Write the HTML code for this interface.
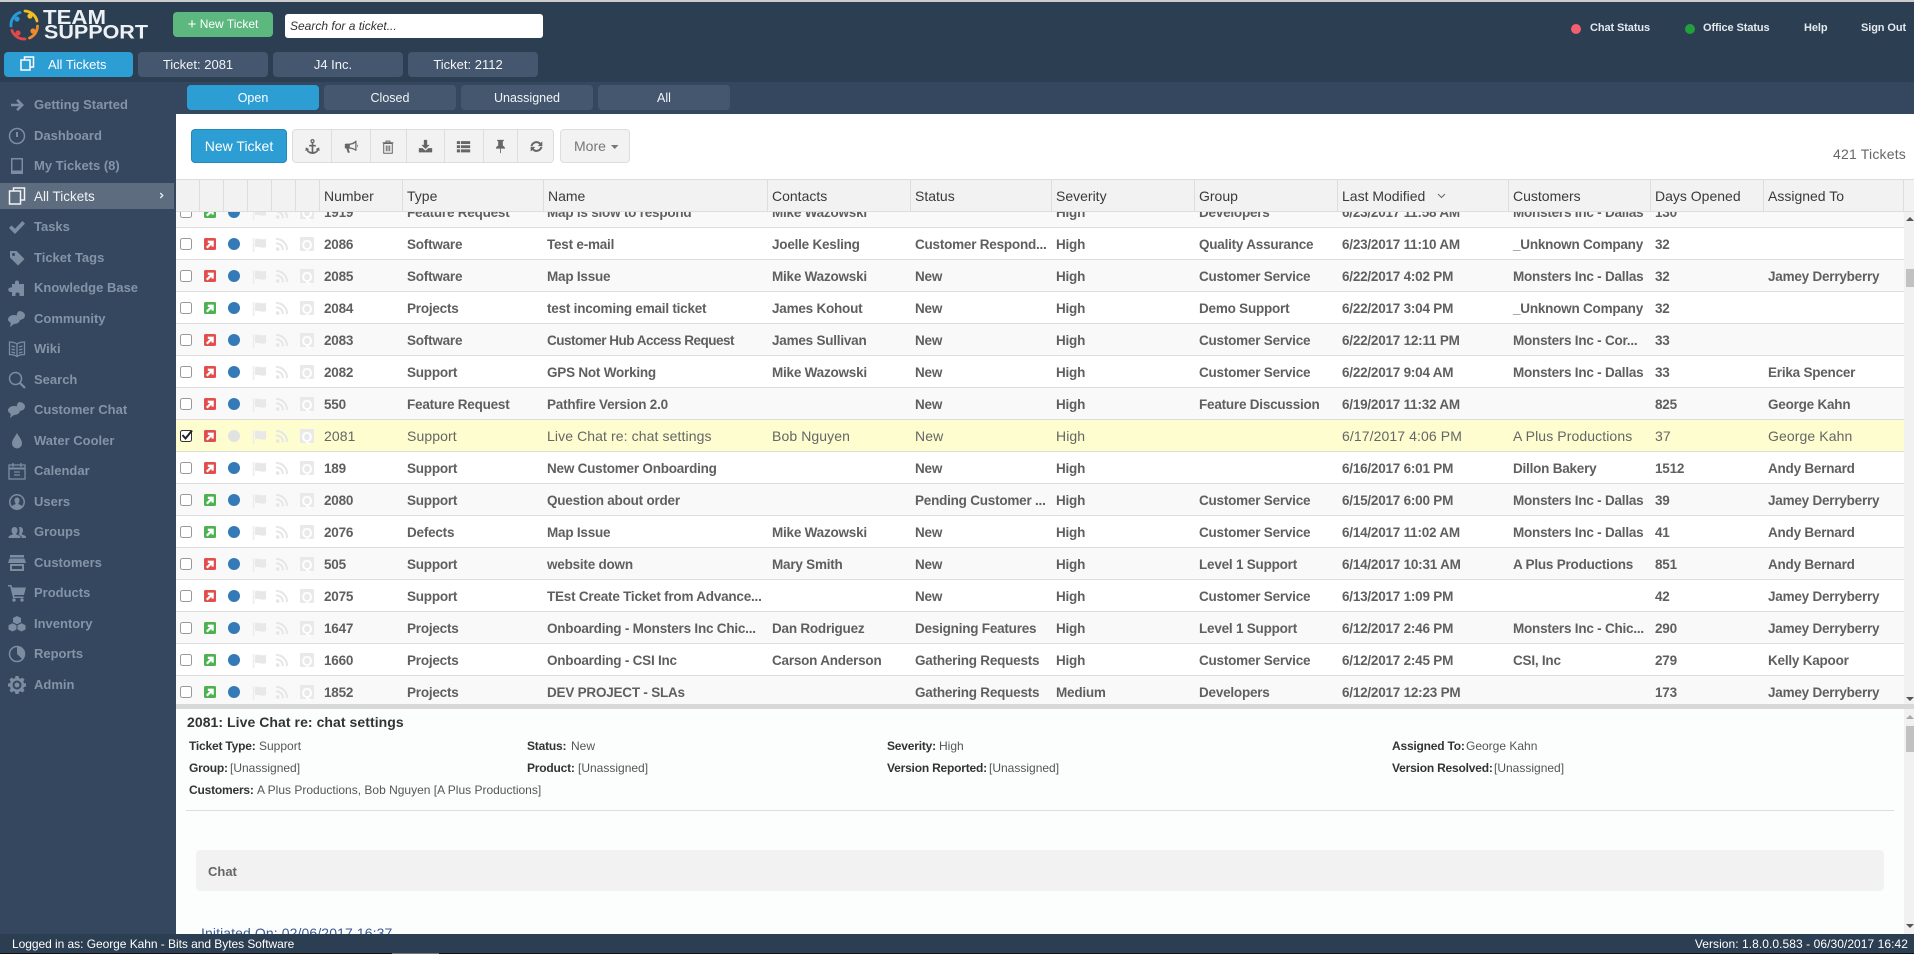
<!DOCTYPE html>
<html>
<head>
<meta charset="utf-8">
<title>TeamSupport</title>
<style>
html,body{margin:0;padding:0;width:1914px;height:954px;overflow:hidden;background:#fff}
body{position:relative;font-family:"Liberation Sans",Arial,sans-serif}
.a{position:absolute}
#top{left:0;top:0;width:1914px;height:82px;background:#2c3e52;border-top:2px solid #ccc;box-sizing:border-box}
#bar{left:0;top:82px;width:1914px;height:32px;background:#34475e}
#side{left:0;top:82px;width:176px;height:852px;background:#34475e}
.tab{position:absolute;height:25px;line-height:25px;text-align:center;color:#f2f4f6;font-size:13px;border-radius:4px;background:#44576f;box-sizing:border-box}
.t2{padding-right:10px}
.t3{line-height:26px;font-size:12.5px}
.on{background:#2c9ed4;color:#fff}
.st{position:absolute;top:22px;font-size:11px;font-weight:bold;color:#e4e9ee;line-height:12px;white-space:nowrap;letter-spacing:-.1px}
.s{position:absolute;left:0;width:174px;height:20px;line-height:20px;font-size:13px;font-weight:bold;color:#8494a8}
.s span{position:absolute;left:34px;top:0;white-space:nowrap}
.s svg{position:absolute;left:8px;top:1px;width:18px;height:18px;fill:#7c8ca1;stroke:none}
.sa{height:26px;line-height:26px;background:#5d6c7e;color:#f0f3f5;font-weight:normal}
.sa span{top:1px;line-height:26px;font-size:13.5px}
.btn{position:absolute;top:129px;height:34px;border-radius:4px}
.ti{position:absolute;top:139px;width:15px;height:15px;fill:#666}
.sep{position:absolute;top:130px;height:32px;width:1px;background:#ddd}
#hd{left:176px;top:179px;width:1738px;height:33px;background:#f2f2f2;border-top:1px solid #ddd;border-bottom:1px solid #ddd;box-sizing:border-box}
.hs{position:absolute;top:180px;height:31px;width:1px;background:#ddd}
.h{position:absolute;top:181px;height:31px;line-height:31px;font-size:14px;color:#3a3a3a;white-space:nowrap}
#list{left:176px;top:212px;width:1728px;height:492px;overflow:hidden;background:#fff}
.r{position:absolute;left:0;width:1728px;height:32px;border-bottom:1px solid #ddd;background:#fff;font-size:13.5px;font-weight:bold;color:#5f5f5f;letter-spacing:-.22px;box-sizing:border-box}
.o{background:#f9f9f9}
.y{background:#fdfdcf;font-weight:normal;font-size:14px;letter-spacing:.1px;color:#666}
.r svg{position:absolute;left:0;top:0;width:145px;height:31px}
.r b{position:absolute;top:1px;font-weight:inherit;line-height:31px;white-space:nowrap}
.c1{left:148px}.c2{left:231px}.c3{left:371px}.c4{left:596px}.c5{left:739px}.c6{left:880px}.c7{left:1023px}.c8{left:1166px}.c9{left:1337px}.c10{left:1479px}.c11{left:1592px}
#spl{left:176px;top:704px;width:1738px;height:5px;background:#d8d8d8}
#det{left:176px;top:709px;width:1738px;height:225px;background:#fcfefe;overflow:hidden}
.l{position:absolute;font-size:12px;letter-spacing:-.2px;font-weight:bold;color:#333;white-space:nowrap;line-height:14px}
.v{position:absolute;font-size:12px;color:#555;white-space:nowrap;line-height:14px}
#foot{left:0;top:934px;width:1914px;height:19px;background:#2c3e52;color:#fff;font-size:12px;line-height:21px;overflow:hidden}
</style>
</head>
<body>
<svg width="0" height="0" style="position:absolute">
<defs>
<symbol id="b" viewBox="0 0 145 31">
<rect x="4.500" y="10.500" width="11" height="11" rx="2" fill="#fff" stroke="#999"/>
<path d="M77.500 10v14" stroke="#ececec" stroke-width="1.500"/>
<path d="M79 11c3-1.500 6 1.500 11-.2v8.400c-5 1.600-8-1.600-11 .2z" fill="#e8e8e8"/>
<circle cx="101.700" cy="21" r="1.800" fill="#e6e6e6"/>
<path d="M100 15.500a6 6 0 0 1 6.700 6.700M100 11a10.500 10.500 0 0 1 11 11" fill="none" stroke="#e6e6e6" stroke-width="2"/>
<rect x="124" y="9" width="14" height="14" rx="1" fill="#e9e9e9"/>
<text x="131" y="21.500" text-anchor="middle" font-family="Liberation Sans" font-size="14" font-weight="bold" fill="#fff">Q</text>
</symbol>
<symbol id="R" viewBox="0 0 145 31">
<use href="#b" width="145" height="31"/>
<rect x="28" y="10" width="12" height="12" rx="1.500" fill="#e04e4e"/>
<path d="M30.800 19.700l5.400-5.400M31.800 13.800h4.800v4.800" fill="none" stroke="#fff" stroke-width="2.300"/>
<circle cx="58" cy="16" r="6" fill="#337ab7"/>
</symbol>
<symbol id="G" viewBox="0 0 145 31">
<use href="#b" width="145" height="31"/>
<rect x="28" y="10" width="12" height="12" rx="1.500" fill="#4cb24f"/>
<path d="M30.800 19.700l5.400-5.400M31.800 13.800h4.800v4.800" fill="none" stroke="#fff" stroke-width="2.300"/>
<circle cx="58" cy="16" r="6" fill="#337ab7"/>
</symbol>
<symbol id="S" viewBox="0 0 145 31">
<use href="#b" width="145" height="31"/>
<rect x="4.500" y="10.500" width="11" height="11" rx="2" fill="#fff" stroke="#333"/>
<path d="M6.500 15l3 3.500 6.500-8" fill="none" stroke="#222" stroke-width="2"/>
<rect x="28" y="10" width="12" height="12" rx="1.500" fill="#e04e4e"/>
<path d="M30.800 19.700l5.400-5.400M31.800 13.800h4.800v4.800" fill="none" stroke="#fff" stroke-width="2.300"/>
<circle cx="58" cy="16" r="6" fill="#e2e2e2"/>
</symbol>
</defs>
</svg>

<div class="a" id="top"></div>
<div class="a" id="bar"></div>

<!-- logo -->
<svg class="a" style="left:0;top:0" width="160" height="48" viewBox="0 0 160 48">
<g fill="none" stroke-width="2.800" stroke-linecap="round">
<path d="M11 26a13 13 0 0 1 9-13.500" stroke="#2a9bd8"/>
<path d="M25 11a13 13 0 0 1 12 10" stroke="#f0c020"/>
<path d="M37.500 26a13 13 0 0 1-8 12" stroke="#ec8a2c"/>
<path d="M25 39a13 13 0 0 1-13-8.500" stroke="#e0484c"/>
</g>
<circle cx="17" cy="19" r="2.600" fill="#2a9bd8"/><circle cx="30" cy="16" r="2.600" fill="#f0c020"/>
<circle cx="33" cy="31" r="2.600" fill="#ec8a2c"/><circle cx="18" cy="33" r="2.600" fill="#e0484c"/>
<text x="43" y="24" font-family="Liberation Sans" font-size="20" font-weight="bold" fill="#eef1f3" textLength="63" lengthAdjust="spacingAndGlyphs">TEAM</text>
<text x="44" y="38.500" font-family="Liberation Sans" font-size="19" font-weight="bold" fill="#eef1f3" textLength="104" lengthAdjust="spacingAndGlyphs">SUPPORT</text>
</svg>

<div class="a" style="left:173px;top:12px;width:100px;height:25px;background:#5cb87f;border-radius:4px;color:#fff;font-size:12px;line-height:25px;text-align:center;"><span style="font-size:15px;line-height:20px;vertical-align:-1px">+</span> New Ticket</div>
<div class="a" style="left:285px;top:14px;width:258px;height:24px;background:#fff;border-radius:3px;font-size:12px;font-style:italic;color:#333;line-height:25px;padding-left:5px;box-sizing:border-box">Search for a ticket...</div>

<svg class="a" style="left:1570px;top:23px" width="12" height="12"><circle cx="6" cy="6" r="5" fill="#f25f6e"/></svg>
<div class="st" style="left:1590px">Chat Status</div>
<svg class="a" style="left:1684px;top:23px" width="12" height="12"><circle cx="6" cy="6" r="5" fill="#21a03c"/></svg>
<div class="st" style="left:1703px">Office Status</div>
<div class="st" style="left:1804px">Help</div>
<div class="st" style="left:1861px">Sign Out</div>

<div class="tab on" style="left:4px;top:52px;width:129px;padding-left:44px;text-align:left">All Tickets</div>
<svg class="a" style="left:20px;top:56px" width="15" height="16" fill="none" stroke="#fff" stroke-width="1.500"><rect x="4.500" y="1" width="9" height="10"/><rect x="1" y="4" width="9" height="10" fill="#2c9ed4"/></svg>
<div class="tab t2" style="left:138px;top:52px;width:130px">Ticket: 2081</div>
<div class="tab t2" style="left:273px;top:52px;width:130px">J4 Inc.</div>
<div class="tab t2" style="left:408px;top:52px;width:130px">Ticket: 2112</div>

<div class="tab on t3" style="left:187px;top:85px;width:132px">Open</div>
<div class="tab t3" style="left:324px;top:85px;width:132px">Closed</div>
<div class="tab t3" style="left:461px;top:85px;width:132px">Unassigned</div>
<div class="tab t3" style="left:598px;top:85px;width:132px">All</div>

<!-- sidebar -->
<div class="a" id="side"></div>
<div class="s" style="top:95px"><svg viewBox="0 0 18 18"><path d="M10 3l6 6-6 6-1.800-1.800L11 10.300H3V7.700h8L8.200 4.800z"/></svg><span>Getting Started</span></div>
<div class="s" style="top:126px"><svg viewBox="0 0 18 18" style="fill:none;stroke:#7c8ca1;stroke-width:1.500"><circle cx="9" cy="9" r="7.500"/><path d="M9 5v5" stroke-width="2"/></svg><span>Dashboard</span></div>
<div class="s" style="top:156px"><svg viewBox="0 0 18 18"><path d="M3 1h12v16H3zM4.500 2.500v11h9v-11z" fill-rule="evenodd"/></svg><span>My Tickets (8)</span></div>
<div class="s sa" style="top:183px"><svg viewBox="0 0 18 18" style="top:4px;fill:none;stroke:#f2f4f6;stroke-width:1.500"><rect x="5.500" y="1" width="11" height="12"/><rect x="1.500" y="4" width="11" height="13" style="fill:#5d6c7e"/></svg><span>All Tickets</span><svg viewBox="0 0 8 10" style="left:159px;top:9px;width:5px;height:7px;fill:none;stroke:#dff3ff;stroke-width:2"><path d="M2 1l4 4-4 4"/></svg></div>
<div class="s" style="top:217px"><svg viewBox="0 0 18 18"><path d="M1 10l2.600-2.600 3.400 3.400 7.400-7.800L17 5.600 7 16z"/></svg><span>Tasks</span></div>
<div class="s" style="top:248px"><svg viewBox="0 0 18 18"><path d="M2 2h6.500l8 8-6.500 6.500-8-8zM5.500 4A1.500 1.500 0 1 0 5.600 7 1.500 1.500 0 0 0 5.500 4z" fill-rule="evenodd"/></svg><span>Ticket Tags</span></div>
<div class="s" style="top:278px"><svg viewBox="0 0 18 18"><path d="M7 5V3.500a2 2 0 1 1 4 0V5h5v12H11.500v-1.500a2 2 0 1 0-4 0V17H4v-4H2.500a2.200 2.200 0 1 1 0-4.500H4V5z"/></svg><span>Knowledge Base</span></div>
<div class="s" style="top:309px"><svg viewBox="0 0 18 18"><path d="M11 1c3.500 0 6 2 6 4.500S14.500 10 11 10c-.5 0-1-.1-1.500-.2C8.600 6.700 8 3 11 1zM6 5c3.500 0 6 2 6 4.500S9.500 14 6 14l-4 3 .8-4C1.500 12 0 10.800 0 9.500 0 7 2.500 5 6 5z"/></svg><span>Community</span></div>
<div class="s" style="top:339px"><svg viewBox="0 0 18 18" style="fill:none;stroke:#7c8ca1;stroke-width:1.300"><path d="M9 4C7 2.500 4 2 1.500 2v12.500c2.500 0 5.500.5 7.500 2 2-1.500 5-2 7.500-2V2C14 2 11 2.500 9 4zM9 4v13M3.500 6l3.500 1M3.500 9l3.500 1M3.500 12l3.500 1M14.500 6L11 7M14.500 9L11 10M14.500 12L11 13"/></svg><span>Wiki</span></div>
<div class="s" style="top:370px"><svg viewBox="0 0 18 18" style="fill:none;stroke:#7c8ca1;stroke-width:1.500"><circle cx="7.500" cy="7.500" r="6"/><path d="M12 12l5 5" stroke-width="2.200"/></svg><span>Search</span></div>
<div class="s" style="top:400px"><svg viewBox="0 0 18 18"><path d="M11 1c3.500 0 6 2 6 4.500S14.500 10 11 10c-.5 0-1-.1-1.500-.2C8.600 6.700 8 3 11 1zM6 5c3.500 0 6 2 6 4.500S9.500 14 6 14l-4 3 .8-4C1.500 12 0 10.800 0 9.500 0 7 2.500 5 6 5z"/></svg><span>Customer Chat</span></div>
<div class="s" style="top:431px"><svg viewBox="0 0 18 18"><path d="M9 1c2 4 5 6.500 5 10.500a5 5 0 0 1-10 0C4 7.500 7 5 9 1z"/></svg><span>Water Cooler</span></div>
<div class="s" style="top:461px"><svg viewBox="0 0 18 18" style="fill:none;stroke:#7c8ca1;stroke-width:1.300"><rect x="1" y="3" width="16" height="14"/><path d="M1 6.500h16" stroke-width="2"/><path d="M5 1v4M13 1v4M6 10h6M6 13h6"/></svg><span>Calendar</span></div>
<div class="s" style="top:492px"><svg viewBox="0 0 18 18"><path d="M9 1a8 8 0 1 0 0 16A8 8 0 0 0 9 1zm0 1.500a6.500 6.500 0 0 1 5 10.600c-1-1.200-2.500-1.600-3.500-2v-1a3.500 3.500 0 0 0 1-2.600C11.500 5.500 10.500 4.500 9 4.500S6.500 5.500 6.500 7.500a3.500 3.500 0 0 0 1 2.600v1c-1 .4-2.500.8-3.500 2A6.500 6.500 0 0 1 9 2.500z" fill-rule="evenodd"/></svg><span>Users</span></div>
<div class="s" style="top:522px"><svg viewBox="0 0 18 18"><path d="M6.500 4C8.500 4 9.500 5.500 9.500 7.500c0 1.300-.5 2.500-1.200 3v1c1.500.6 3.700 1 4.200 2.500v1H.500v-1c.5-1.500 2.700-1.900 4.200-2.500v-1c-.7-.5-1.200-1.700-1.200-3C3.500 5.500 4.500 4 6.500 4zM12 4c2 0 3 1.500 3 3.500 0 1.300-.5 2.500-1.200 3v1c1.500.5 3.700.8 4.200 2.500v1h-4c-.5-1.800-2-2.700-3.500-3.200.8-1 1-2.200 1-3.300C11.500 6 11.300 5 10.800 4.300 11.200 4.100 11.600 4 12 4z"/></svg><span>Groups</span></div>
<div class="s" style="top:553px"><svg viewBox="0 0 18 18"><path d="M2 1h14v2.500H2zM1.500 4.500h15L18 9H0zM2 10h14v7H2zm2 2v3h10v-3z" fill-rule="evenodd"/></svg><span>Customers</span></div>
<div class="s" style="top:583px"><svg viewBox="0 0 18 18"><path d="M0 1h3.500l.7 2.500H18l-2 7.500H6l.4 1.500H15.500V14H5L2.200 2.500H0z"/><circle cx="6" cy="16" r="1.700"/><circle cx="14" cy="16" r="1.700"/></svg><span>Products</span></div>
<div class="s" style="top:614px"><svg viewBox="0 0 18 18"><path d="M9 1l4 2v4.300l-4 2-4-2V3zM4.500 8.200l4 2v4.300l-4 2-4-2v-4.300zM13.500 8.200l4 2v4.300l-4 2-4-2v-4.300z"/></svg><span>Inventory</span></div>
<div class="s" style="top:644px"><svg viewBox="0 0 18 18"><circle cx="9" cy="9" r="7.500" style="fill:none;stroke:#7c8ca1;stroke-width:1.500"/><path d="M9 1.500a7.500 7.500 0 0 1 7.500 7.500c0 2-.8 3.800-2.100 5.200L9 9z"/></svg><span>Reports</span></div>
<div class="s" style="top:675px"><svg viewBox="0 0 18 18"><path d="M7.500 1h3l.5 2.200 1.500.6 2-1.200 2 2-1.200 2 .6 1.500L18 8.500v3l-2.100.5-.6 1.500 1.200 2-2 2-2-1.200-1.500.6-.5 2.100h-3l-.5-2.100-1.500-.6-2 1.200-2-2 1.200-2-.6-1.500L0 11.500v-3l2.100-.4.600-1.500-1.200-2 2-2 2 1.200 1.500-.6zM9 5.500a4.500 4.500 0 1 0 0 9 4.500 4.500 0 0 0 0-9zm0 2a2.500 2.500 0 1 1 0 5 2.500 2.500 0 0 1 0-5z" fill-rule="evenodd" transform="translate(0 -1)"/></svg><span>Admin</span></div>

<!-- toolbar -->
<div class="btn" style="left:191px;width:96px;background:#2c9ed4;border:1px solid #2488bb;box-sizing:border-box;color:#fff;font-size:14px;line-height:32px;text-align:center">New Ticket</div>
<div class="btn" style="left:292px;width:262px;background:#f2f2f2;border:1px solid #ddd;box-sizing:border-box"></div>
<div class="sep" style="left:331px"></div><div class="sep" style="left:370px"></div><div class="sep" style="left:406px"></div><div class="sep" style="left:444px"></div><div class="sep" style="left:483px"></div><div class="sep" style="left:517px"></div>
<svg class="ti" style="left:305px" viewBox="0 0 18 18"><path d="M9 0a2.500 2.500 0 0 1 1 4.800V7h3v2h-3v6.500c2 0 3.500-1 4.300-2.500L13 12l4-2 .5 4.500-1.300-.8C15 16 12.500 18 9 18s-6-2-7.200-4.300l-1.300.8L1 10l4 2-1.300 1c.8 1.500 2.300 2.500 4.300 2.500V9H5V7h3V4.800A2.500 2.500 0 0 1 9 0zm0 1.500a1 1 0 1 0 0 2 1 1 0 0 0 0-2z"/></svg>
<svg class="ti" style="left:344px" viewBox="0 0 18 18"><path d="M15 2v12l-1 .3C11 12 8 11.500 5.500 11.500l1.500 5H4.500L3 11.500 1 11V6l2-.5h3C9 5.500 12 4 14 2zM13.500 4.500C11.800 6 9.500 7 7 7v3c2.500.2 4.800 1 6.500 2.300zM16 6.500c1.300.5 1.300 3 0 3.500z"/></svg>
<svg class="ti" style="left:381px;top:140px;width:14px;height:14px" viewBox="0 0 18 18" fill="none"><path d="M3.500 4.500h11V17h-11zM2 3.500h14M6.500 3V1.500h5V3M6.800 7v7.500M9 7v7.500M11.200 7v7.500" fill="none" stroke="#666" stroke-width="1.300"/></svg>
<svg class="ti" style="left:418px" viewBox="0 0 18 18"><path d="M7 1h4v6h3l-5 5-5-5h3zM1 11h4.500l3.500 3 3.500-3H17v5H1z"/></svg>
<svg class="ti" style="left:456px" viewBox="0 0 18 18"><path d="M1 2.500h4v3.500H1zM6 2.500h11v3.500H6zM1 7.500h4V11H1zM6 7.500h11V11H6zM1 12.500h4V16H1zM6 12.500h11V16H6z"/></svg>
<svg class="ti" style="left:493px" viewBox="0 0 18 18"><path d="M5 1h8v1.500h-1.200V8c1.500.8 2.700 2 2.700 3.500h-5V17h-1v-5.500h-5C3.500 10 4.700 8.800 6.200 8V2.500H5z"/></svg>
<svg class="ti" style="left:529px" viewBox="0 0 18 18"><path d="M9 2.500c2 0 3.700.8 5 2.200L16 3v5.500h-5.500l2-2C11.500 5.600 10.300 5 9 5 6.800 5 5 6.400 4.300 8.500H1.800C2.600 5 5.500 2.500 9 2.500zM2 9.500h5.500l-2 2c1 .9 2.200 1.500 3.500 1.500 2.200 0 4-1.400 4.700-3.500h2.500C15.400 13 12.500 15.500 9 15.500c-2 0-3.700-.8-5-2.200L2 15z"/></svg>
<div class="btn" style="left:560px;width:70px;background:#f2f2f2;border:1px solid #ddd;box-sizing:border-box;color:#777;font-size:14px;line-height:32px;padding-left:13px">More</div>
<svg class="a" style="left:610px;top:144px" width="10" height="6"><path d="M1 1h7.500L4.750 5z" fill="#777"/></svg>
<div class="a" style="right:8px;top:146px;font-size:14px;color:#666;line-height:16px;white-space:nowrap;letter-spacing:.2px">421 Tickets</div>

<!-- table header -->
<div class="a" id="hd"></div>
<div class="hs" style="left:199px"></div><div class="hs" style="left:223px"></div><div class="hs" style="left:247px"></div><div class="hs" style="left:271px"></div><div class="hs" style="left:295px"></div><div class="hs" style="left:319px"></div><div class="hs" style="left:402px"></div><div class="hs" style="left:543px"></div><div class="hs" style="left:767px"></div><div class="hs" style="left:910px"></div><div class="hs" style="left:1051px"></div><div class="hs" style="left:1194px"></div><div class="hs" style="left:1337px"></div><div class="hs" style="left:1508px"></div><div class="hs" style="left:1650px"></div><div class="hs" style="left:1763px"></div><div class="hs" style="left:1903px"></div>
<div class="h" style="left:324px">Number</div><div class="h" style="left:407px">Type</div><div class="h" style="left:548px">Name</div><div class="h" style="left:772px">Contacts</div><div class="h" style="left:915px">Status</div><div class="h" style="left:1056px">Severity</div><div class="h" style="left:1199px">Group</div><div class="h" style="left:1342px">Last Modified</div><div class="h" style="left:1513px">Customers</div><div class="h" style="left:1655px">Days Opened</div><div class="h" style="left:1768px">Assigned To</div>
<svg class="a" style="left:1437px;top:193px" width="9" height="6"><path d="M1 1l3.500 3.500L8 1" fill="none" stroke="#666"/></svg>

<!-- rows -->
<div class="a" id="list">
<div class="r o" style="top:-16px"><svg><use href="#G"/></svg><b class="c1">1919</b><b class="c2">Feature Request</b><b class="c3">Map is slow to respond</b><b class="c4">Mike Wazowski</b><b class="c6">High</b><b class="c7">Developers</b><b class="c8">6/23/2017 11:58 AM</b><b class="c9">Monsters Inc - Dallas</b><b class="c10">130</b></div>
<div class="r" style="top:16px"><svg><use href="#R"/></svg><b class="c1">2086</b><b class="c2">Software</b><b class="c3">Test e-mail</b><b class="c4">Joelle Kesling</b><b class="c5">Customer Respond...</b><b class="c6">High</b><b class="c7">Quality Assurance</b><b class="c8">6/23/2017 11:10 AM</b><b class="c9">_Unknown Company</b><b class="c10">32</b></div>
<div class="r o" style="top:48px"><svg><use href="#R"/></svg><b class="c1">2085</b><b class="c2">Software</b><b class="c3">Map Issue</b><b class="c4">Mike Wazowski</b><b class="c5">New</b><b class="c6">High</b><b class="c7">Customer Service</b><b class="c8">6/22/2017 4:02 PM</b><b class="c9">Monsters Inc - Dallas</b><b class="c10">32</b><b class="c11">Jamey Derryberry</b></div>
<div class="r" style="top:80px"><svg><use href="#G"/></svg><b class="c1">2084</b><b class="c2">Projects</b><b class="c3">test incoming email ticket</b><b class="c4">James Kohout</b><b class="c5">New</b><b class="c6">High</b><b class="c7">Demo Support</b><b class="c8">6/22/2017 3:04 PM</b><b class="c9">_Unknown Company</b><b class="c10">32</b></div>
<div class="r o" style="top:112px"><svg><use href="#R"/></svg><b class="c1">2083</b><b class="c2">Software</b><b class="c3" style="letter-spacing:-.5px">Customer Hub Access Request</b><b class="c4">James Sullivan</b><b class="c5">New</b><b class="c6">High</b><b class="c7">Customer Service</b><b class="c8">6/22/2017 12:11 PM</b><b class="c9">Monsters Inc - Cor...</b><b class="c10">33</b></div>
<div class="r" style="top:144px"><svg><use href="#R"/></svg><b class="c1">2082</b><b class="c2">Support</b><b class="c3">GPS Not Working</b><b class="c4">Mike Wazowski</b><b class="c5">New</b><b class="c6">High</b><b class="c7">Customer Service</b><b class="c8">6/22/2017 9:04 AM</b><b class="c9">Monsters Inc - Dallas</b><b class="c10">33</b><b class="c11">Erika Spencer</b></div>
<div class="r o" style="top:176px"><svg><use href="#R"/></svg><b class="c1">550</b><b class="c2">Feature Request</b><b class="c3">Pathfire Version 2.0</b><b class="c5">New</b><b class="c6">High</b><b class="c7">Feature Discussion</b><b class="c8">6/19/2017 11:32 AM</b><b class="c10">825</b><b class="c11">George Kahn</b></div>
<div class="r y" style="top:208px"><svg><use href="#S"/></svg><b class="c1">2081</b><b class="c2">Support</b><b class="c3">Live Chat re: chat settings</b><b class="c4">Bob Nguyen</b><b class="c5">New</b><b class="c6">High</b><b class="c8">6/17/2017 4:06 PM</b><b class="c9">A Plus Productions</b><b class="c10">37</b><b class="c11">George Kahn</b></div>
<div class="r" style="top:240px"><svg><use href="#R"/></svg><b class="c1">189</b><b class="c2">Support</b><b class="c3">New Customer Onboarding</b><b class="c5">New</b><b class="c6">High</b><b class="c8">6/16/2017 6:01 PM</b><b class="c9">Dillon Bakery</b><b class="c10">1512</b><b class="c11">Andy Bernard</b></div>
<div class="r o" style="top:272px"><svg><use href="#G"/></svg><b class="c1">2080</b><b class="c2">Support</b><b class="c3">Question about order</b><b class="c5">Pending Customer ...</b><b class="c6">High</b><b class="c7">Customer Service</b><b class="c8">6/15/2017 6:00 PM</b><b class="c9">Monsters Inc - Dallas</b><b class="c10">39</b><b class="c11">Jamey Derryberry</b></div>
<div class="r" style="top:304px"><svg><use href="#G"/></svg><b class="c1">2076</b><b class="c2">Defects</b><b class="c3">Map Issue</b><b class="c4">Mike Wazowski</b><b class="c5">New</b><b class="c6">High</b><b class="c7">Customer Service</b><b class="c8">6/14/2017 11:02 AM</b><b class="c9">Monsters Inc - Dallas</b><b class="c10">41</b><b class="c11">Andy Bernard</b></div>
<div class="r o" style="top:336px"><svg><use href="#R"/></svg><b class="c1">505</b><b class="c2">Support</b><b class="c3">website down</b><b class="c4">Mary Smith</b><b class="c5">New</b><b class="c6">High</b><b class="c7">Level 1 Support</b><b class="c8">6/14/2017 10:31 AM</b><b class="c9">A Plus Productions</b><b class="c10">851</b><b class="c11">Andy Bernard</b></div>
<div class="r" style="top:368px"><svg><use href="#R"/></svg><b class="c1">2075</b><b class="c2">Support</b><b class="c3">TEst Create Ticket from Advance...</b><b class="c5">New</b><b class="c6">High</b><b class="c7">Customer Service</b><b class="c8">6/13/2017 1:09 PM</b><b class="c10">42</b><b class="c11">Jamey Derryberry</b></div>
<div class="r o" style="top:400px"><svg><use href="#G"/></svg><b class="c1">1647</b><b class="c2">Projects</b><b class="c3">Onboarding - Monsters Inc Chic...</b><b class="c4">Dan Rodriguez</b><b class="c5">Designing Features</b><b class="c6">High</b><b class="c7">Level 1 Support</b><b class="c8">6/12/2017 2:46 PM</b><b class="c9">Monsters Inc - Chic...</b><b class="c10">290</b><b class="c11">Jamey Derryberry</b></div>
<div class="r" style="top:432px"><svg><use href="#G"/></svg><b class="c1">1660</b><b class="c2">Projects</b><b class="c3">Onboarding - CSI Inc</b><b class="c4">Carson Anderson</b><b class="c5">Gathering Requests</b><b class="c6">High</b><b class="c7">Customer Service</b><b class="c8">6/12/2017 2:45 PM</b><b class="c9">CSI, Inc</b><b class="c10">279</b><b class="c11">Kelly Kapoor</b></div>
<div class="r o" style="top:464px"><svg><use href="#G"/></svg><b class="c1">1852</b><b class="c2">Projects</b><b class="c3">DEV PROJECT - SLAs</b><b class="c5">Gathering Requests</b><b class="c6">Medium</b><b class="c7">Developers</b><b class="c8">6/12/2017 12:23 PM</b><b class="c10">173</b><b class="c11">Jamey Derryberry</b></div>
</div>

<!-- list scrollbar -->
<div class="a" style="left:1904px;top:212px;width:10px;height:492px;background:#f1f1f1"></div>
<div class="a" style="left:1906px;top:269px;width:8px;height:18px;background:#c1c1c1"></div>
<svg class="a" style="left:1906px;top:216px" width="8" height="6"><path d="M0 5h8L4 1z" fill="#555"/></svg>
<svg class="a" style="left:1906px;top:696px" width="8" height="6"><path d="M0 1h8L4 5z" fill="#555"/></svg>

<div class="a" id="spl"></div>

<!-- details -->
<div class="a" id="det">
<div class="a" style="left:11px;top:5px;font-size:14px;font-weight:bold;color:#333;line-height:16px;letter-spacing:.06px;white-space:nowrap">2081: Live Chat re: chat settings</div>
<div class="l" style="left:13px;top:30px">Ticket Type:</div><div class="v" style="left:83px;top:30px">Support</div>
<div class="l" style="left:351px;top:30px">Status:</div><div class="v" style="left:395px;top:30px">New</div>
<div class="l" style="left:711px;top:30px">Severity:</div><div class="v" style="left:763px;top:30px">High</div>
<div class="l" style="left:1216px;top:30px">Assigned To:</div><div class="v" style="left:1290px;top:30px">George Kahn</div>
<div class="l" style="left:13px;top:52px">Group:</div><div class="v" style="left:54px;top:52px">[Unassigned]</div>
<div class="l" style="left:351px;top:52px">Product:</div><div class="v" style="left:402px;top:52px">[Unassigned]</div>
<div class="l" style="left:711px;top:52px">Version Reported:</div><div class="v" style="left:813px;top:52px">[Unassigned]</div>
<div class="l" style="left:1216px;top:52px">Version Resolved:</div><div class="v" style="left:1318px;top:52px">[Unassigned]</div>
<div class="l" style="left:13px;top:74px">Customers:</div><div class="v" style="left:81px;top:74px">A Plus Productions, Bob Nguyen [A Plus Productions]</div>
<div class="a" style="left:10px;top:101px;width:1708px;height:1px;background:#ddd"></div>
<div class="a" style="left:20px;top:141px;width:1688px;height:41px;background:#f2f2f2;border-radius:4px;color:#666;font-size:13px;font-weight:bold;line-height:43px;padding-left:12px;box-sizing:border-box">Chat</div>
<div class="a" style="left:25px;top:216px;font-size:14px;color:#3b5a91;line-height:16px;white-space:nowrap;letter-spacing:.1px">Initiated On: 02/06/2017 16:37</div>
<div class="a" style="left:1728px;top:0;width:10px;height:225px;background:#f1f1f1"></div>
<div class="a" style="left:1730px;top:17px;width:8px;height:26px;background:#c1c1c1"></div>
<svg class="a" style="left:1730px;top:5px" width="8" height="6"><path d="M0 5h8L4 1z" fill="#aaa"/></svg>
<svg class="a" style="left:1730px;top:214px" width="8" height="6"><path d="M0 1h8L4 5z" fill="#555"/></svg>
</div>

<!-- footer -->
<div class="a" id="foot"><span class="a" style="left:12px;white-space:nowrap;letter-spacing:-.05px">Logged in as: George Kahn - Bits and Bytes Software</span><span class="a" style="right:6px;white-space:nowrap;letter-spacing:.06px">Version: 1.8.0.0.583 - 06/30/2017 16:42</span></div>
<div class="a" style="left:0;top:953px;width:1914px;height:1px;background:#111"></div>
<div class="a" style="left:392px;top:953px;width:47px;height:1px;background:#777"></div>
</body>
</html>
